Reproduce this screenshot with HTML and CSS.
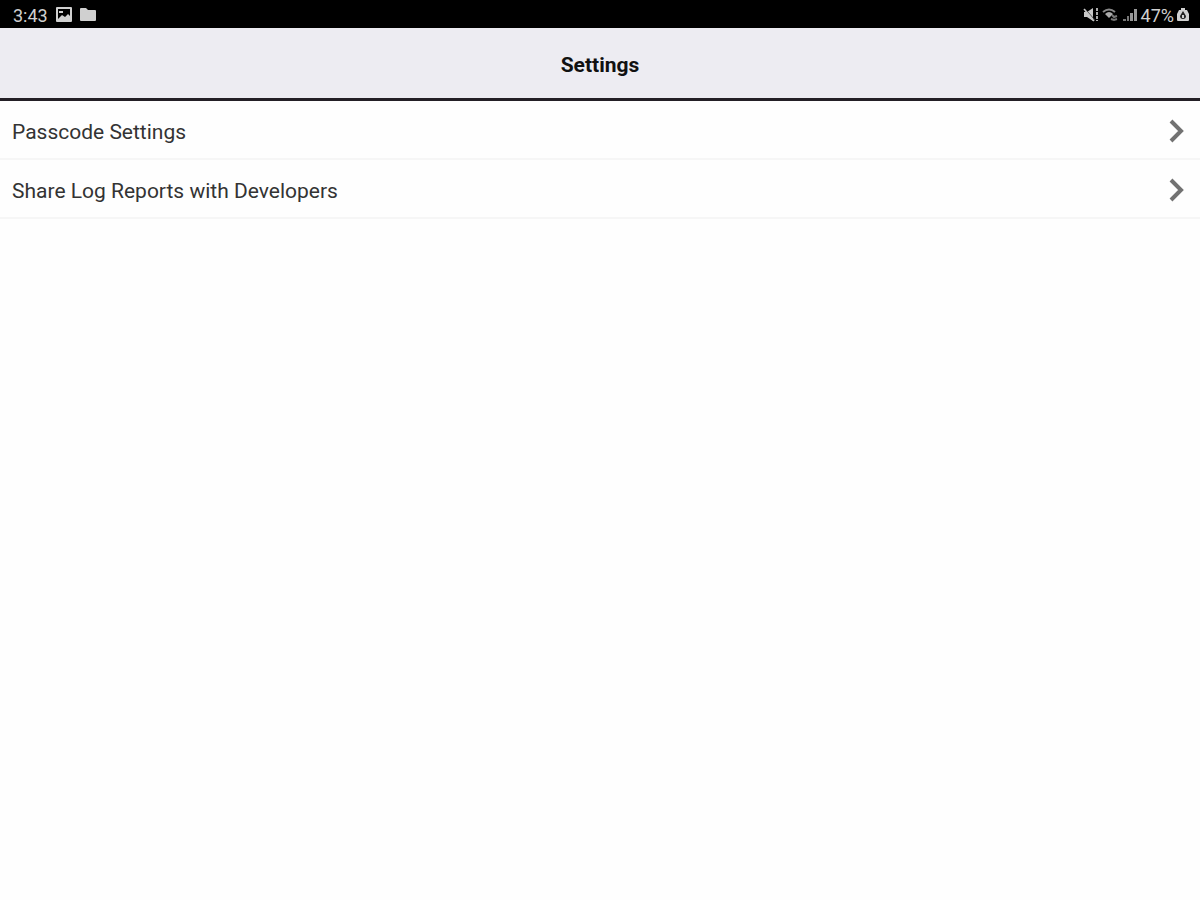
FILE: index.html
```html
<!DOCTYPE html>
<html lang="en">
<head>
  <meta charset="UTF-8" />
  <meta name="viewport" content="width=device-width, initial-scale=1.0"/>
  <title>Settings</title>
  <link rel="stylesheet" href="styles.css">
</head>
<body>
  <div class="status-bar">
    <div class="status-left">
      <span class="time">3:43</span>
      <svg width="16" height="16" viewBox="0 0 16 16" aria-hidden="true">
        <path fill="#d0d0d0" fill-rule="evenodd" d="M1 0h14a1 1 0 0 1 1 1v13a1 1 0 0 1-1 1H1a1 1 0 0 1-1-1V1a1 1 0 0 1 1-1zM2 2v10l4-4 3 2 3-3 2 2V2zM3 4h4v2H3z"/>
      </svg>
      <svg width="16" height="16" viewBox="0 0 16 16" aria-hidden="true">
        <path fill="#d0d0d0" d="M1 1h5l2 2h7a1 1 0 0 1 1 1v9a1 1 0 0 1-1 1H1a1 1 0 0 1-1-1V2a1 1 0 0 1 1-1z"/>
      </svg>
    </div>
    <div class="status-right">
      <!-- muted -->
      <svg width="16" height="16" viewBox="0 0 16 16" aria-hidden="true">
        <path fill="#c8c8c8" d="M1 5h3l6-4v13l-6-4H1z"/>
        <path stroke="#333" stroke-width="1" d="M2 2l10 11"/>
        <path stroke="#c8c8c8" stroke-width="1.5" d="M1 2l10 12"/>
        <path stroke="#aaa" stroke-width="2" stroke-dasharray="3 1" d="M14 1v13"/>
      </svg>
      <!-- wifi -->
      <svg width="17" height="16" viewBox="0 0 17 16" fill="none" aria-hidden="true">
        <path stroke="#888" stroke-width="2" d="M1 5q6-5 12 0"/>
        <path fill="#aaa" d="M3 7q4-4 8 0l-4 4z"/>
        <path stroke="#777" stroke-width="2" d="M10 8l2 2 3-1M9 12l3 1 3-1"/>
      </svg>
      <!-- signal -->
      <svg width="16" height="16" viewBox="0 0 16 16" aria-hidden="true">
        <path fill="#777" d="M1 12h3v2H1zM5 9h2v5H5z"/>
        <path fill="#999" d="M8 6h3v8H8zM12 2h3v12h-3z"/>
      </svg>
      <span class="battery-level">47%</span>
      <!-- battery -->
      <svg width="12" height="16" viewBox="0 0 12 16" aria-hidden="true">
        <path fill="#d0d0d0" d="M4 1h4v2h2l2 4v6a1 1 0 0 1-1 1H1a1 1 0 0 1-1-1V7l2-4h2z"/>
        <path fill="#222" d="M6 4l3 5q0 3-3 3t-3-3z"/>
        <path fill="#d0d0d0" d="M5 8h2v3H5z"/>
      </svg>
    </div>
  </div>

  <header class="header">
    <h1>Settings</h1>
  </header>

  <main class="list">
    <a class="row" href="#passcode">
      <span>Passcode Settings</span>
      <svg width="16" height="24" viewBox="0 0 16 24" fill="none" aria-hidden="true">
        <path stroke="#727272" stroke-width="4" d="M2 2l10 10L2 22"/>
      </svg>
    </a>
    <a class="row" href="#logs">
      <span>Share Log Reports with Developers</span>
      <svg width="16" height="24" viewBox="0 0 16 24" fill="none" aria-hidden="true">
        <path stroke="#727272" stroke-width="4" d="M2 2l10 10L2 22"/>
      </svg>
    </a>
  </main>
</body>
</html>
```
FILE: styles.css
```css
* {
  box-sizing: border-box;
}
body {
  margin: 0;
  font-family: Roboto, sans-serif;
  background: #fefefe;
  color: #333;
}
.status-bar {
  display: flex;
  justify-content: space-between;
  align-items: center;
  height: 28px;
  padding: 2px 11px 0 13px;
  background: #000;
  color: #d0d0d0;
  font-size: 18px;
}
.status-left, .status-right {
  display: flex;
  align-items: center;
}
.status-left {
  gap: 8px;
}
.status-right {
  gap: 3px;
}
.header {
  display: flex;
  justify-content: center;
  align-items: center;
  height: 73px;
  padding-top: 4px;
  border-bottom: 3px solid #231f26;
  background: #edecf2;
}
h1 {
  margin: 0;
  color: #111;
  font-size: 21px;
  font-weight: 700;
}
.row {
  display: flex;
  justify-content: space-between;
  align-items: center;
  min-height: 59px;
  padding: 2px 15px 0 12px;
  border-bottom: 2px solid #f6f6f6;
  color: #333;
  font-size: 21px;
  text-decoration: none;
}
.row span {
  padding-top: 2px;
}
```
